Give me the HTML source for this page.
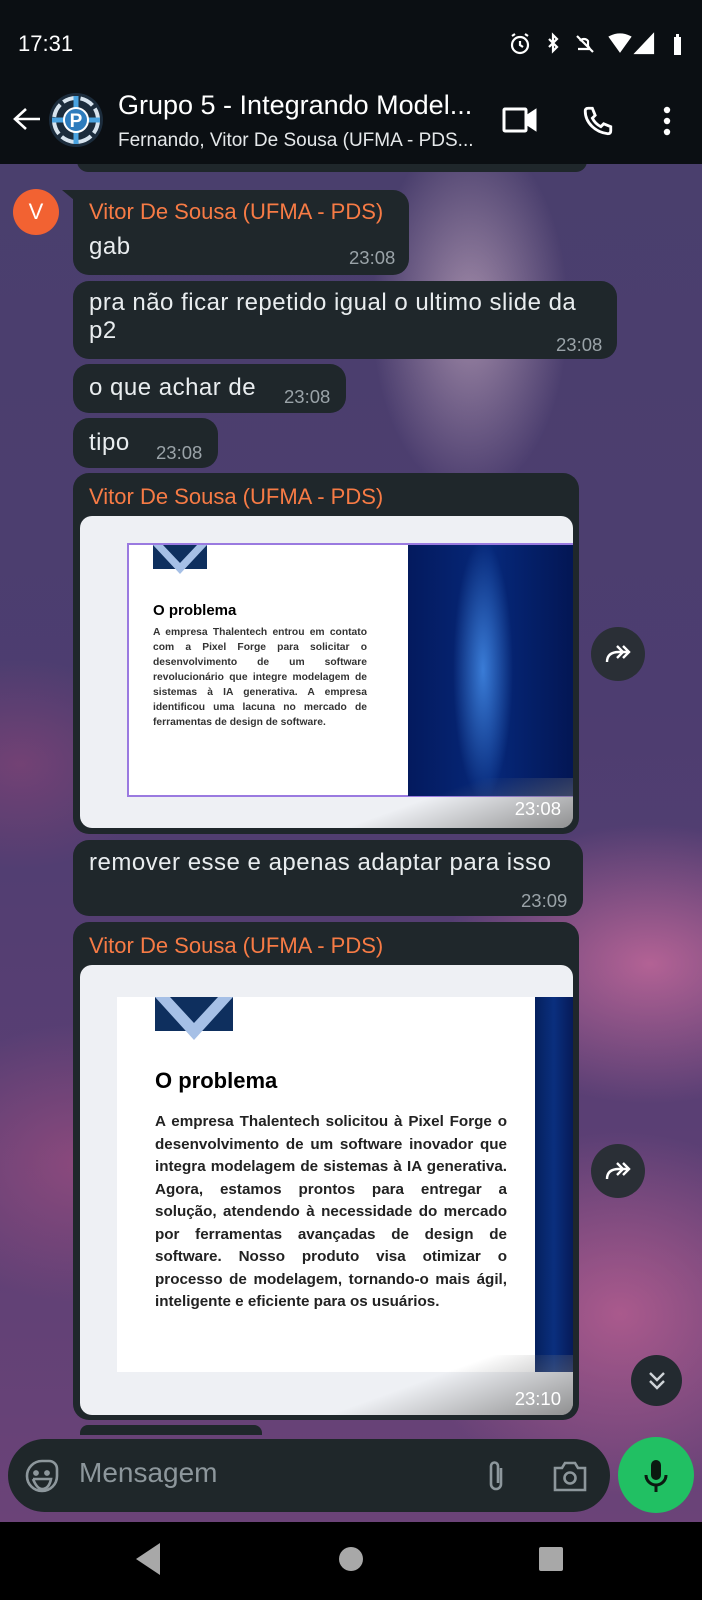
<!DOCTYPE html>
<html><head><meta charset="utf-8"><style>
*{margin:0;padding:0;box-sizing:border-box}
body{width:702px;height:1600px;overflow:hidden;position:relative;font-family:"Liberation Sans",sans-serif;background:#000}
.abs{position:absolute}
.chat{left:0;top:164px;width:702px;height:1358px;background:
radial-gradient(ellipse 140px 260px at 470px 150px,rgba(230,200,215,.55),transparent 70%),
radial-gradient(ellipse 300px 200px at 650px 800px,rgba(210,110,160,.75),transparent 70%),
radial-gradient(ellipse 300px 260px at 620px 1150px,rgba(200,100,150,.7),transparent 70%),
radial-gradient(ellipse 260px 200px at 80px 1000px,rgba(170,80,130,.6),transparent 70%),
radial-gradient(ellipse 200px 150px at 20px 600px,rgba(150,70,120,.5),transparent 70%),
linear-gradient(180deg,#4a3f6d 0%,#4d3d70 40%,#5a3f74 70%,#6b4378 100%)}
.b{position:absolute;background:#1f272b;border-radius:16px;color:#e9edef}
.name{color:#f77b45;font-size:22px;position:absolute;left:16px;white-space:nowrap}
.t{font-size:24px;letter-spacing:.5px;position:absolute;left:16px;white-space:nowrap}
.tm{font-size:18.5px;color:#9aa3a8;position:absolute}
.fw{position:absolute;width:54px;height:54px;border-radius:50%;background:#2a2f36}
.hdr{z-index:2}
</style></head><body>
<div class="abs chat"></div>
<div class="b" style="left:77px;top:150px;width:510px;height:22px"></div>
<!-- status bar + header -->
<div class="abs hdr" style="left:0;top:0;width:702px;height:164px;background:#0b0f13"></div>
<div class="abs hdr" style="left:18px;top:31px;color:#fff;font-size:22px">17:31</div>
<svg class="abs hdr" style="left:505px;top:31px" width="180" height="26" viewBox="0 0 180 26" fill="none" stroke="#fff" stroke-width="2.2">
<circle cx="15" cy="14" r="8"/><path d="M15 10v4l3 2M7 5l3-2M23 5l-3-2"/>
<path d="M44 8l8 8-4 4V4l4 4-8 8"/>
<path d="M73 18h12l-2-3v-5a5 5 0 0 0-8 0M72 5l16 16"/>
<path d="M105 6q10-5 20 0l-10 14z" fill="#fff"/>
<path d="M148 4v18h-17z" fill="#fff"/>
<rect x="169" y="6" width="7" height="18" fill="#fff" stroke="none"/><rect x="171" y="3" width="3" height="3" fill="#fff" stroke="none"/>
</svg>
<svg class="abs hdr" style="left:12px;top:106px" width="30" height="26" viewBox="0 0 30 26" fill="none" stroke="#fff" stroke-width="2.6"><path d="M28 13H4M14 3L3 13l11 10"/></svg>
<svg class="abs hdr" style="left:48px;top:92px" width="56" height="56" viewBox="0 0 56 56">
<circle cx="28" cy="28" r="27" fill="#1c2c3c"/><circle cx="28" cy="28" r="22" fill="none" stroke="#d8e4ee" stroke-width="4" stroke-dasharray="14 4"/>
<path d="M28 4v48M4 28h48" stroke="#4aa3e0" stroke-width="5"/><circle cx="28" cy="28" r="12" fill="#2e7cbd" stroke="#fff" stroke-width="2"/>
<text x="28" y="35" font-size="19" font-weight="bold" fill="#fff" text-anchor="middle" font-family="Liberation Sans">P</text></svg>
<div class="abs hdr" style="left:118px;top:90px;color:#fff;font-size:27px;white-space:nowrap">Grupo 5 - Integrando Model...</div>
<div class="abs hdr" style="left:118px;top:130px;color:#e5e8ea;font-size:19px;white-space:nowrap">Fernando, Vitor De Sousa (UFMA - PDS...</div>
<svg class="abs hdr" style="left:502px;top:106px" width="36" height="30" viewBox="0 0 36 30" fill="none" stroke="#fff" stroke-width="3"><rect x="2" y="3" width="22" height="22" rx="1"/><path d="M24 11l9-6v18l-9-6" fill="#fff"/></svg>
<svg class="abs hdr" style="left:580px;top:104px" width="36" height="34" viewBox="0 0 24 24" fill="none" stroke="#fff" stroke-width="2"><path d="M5 3l3 0 2 5-2 2q2 4 6 6l2-2 5 2v3q0 2-2 2C10 20 3 13 3 5q0-2 2-2z"/></svg>
<svg class="abs hdr" style="left:660px;top:106px" width="14" height="30"><circle cx="7" cy="4" r="3.2" fill="#fff"/><circle cx="7" cy="15" r="3.2" fill="#fff"/><circle cx="7" cy="26" r="3.2" fill="#fff"/></svg>
<!-- chat -->
<div class="abs" style="left:13px;top:189px;width:46px;height:46px;border-radius:50%;background:#f26232;color:#fff;font-size:22px;text-align:center;line-height:46px">V</div>
<div class="b" style="left:73px;top:190px;width:336px;height:85px;border-top-left-radius:0"><div class="name" style="top:9px">Vitor De Sousa (UFMA - PDS)</div><div class="t" style="top:43px">gab</div><div class="tm" style="left:276px;top:57px">23:08</div></div>
<div class="abs" style="left:62px;top:190px;width:0;height:0;border-top:10px solid #1f272b;border-left:12px solid transparent"></div>
<div class="b" style="left:73px;top:281px;width:544px;height:78px"><div class="t" style="top:8px;line-height:28px">pra não ficar repetido igual o ultimo slide da<br>p2</div><div class="tm" style="left:483px;top:53px">23:08</div></div>
<div class="b" style="left:73px;top:364px;width:273px;height:49px"><div class="t" style="top:10px">o que achar de</div><div class="tm" style="left:211px;top:22px">23:08</div></div>
<div class="b" style="left:73px;top:418px;width:145px;height:50px"><div class="t" style="top:11px">tipo</div><div class="tm" style="left:83px;top:24px">23:08</div></div>
<!-- image bubble 1 -->
<div class="b" style="left:73px;top:473px;width:506px;height:361px"><div class="name" style="top:11px">Vitor De Sousa (UFMA - PDS)</div></div>
<div class="abs" style="left:80px;top:516px;width:493px;height:312px;background:#eef0f4;border-radius:12px;overflow:hidden">
 <div class="abs" style="left:47px;top:27px;width:446px;height:254px;background:#fff;border:2px solid #9a7ae0;border-right:none"></div>
 <div class="abs" style="left:328px;top:29px;width:165px;height:251px;background:radial-gradient(ellipse 30px 130px at 75px 125px,rgba(80,160,255,.7),transparent),linear-gradient(90deg,#041a5e,#06287a 50%,#031654)"></div>
 <svg class="abs" style="left:73px;top:29px" width="54" height="30" viewBox="0 0 54 30"><rect x="0" y="0" width="54" height="24" fill="#0e2f5e"/><path d="M0 0l27 29L54 0h-10L27 18 10 0z" fill="#a6c0e6"/></svg>
 <div class="abs" style="left:73px;top:86px;font-size:15px;font-weight:bold;color:#000">O problema</div>
 <div class="abs" style="left:73px;top:109px;width:214px;font-size:10.3px;line-height:15px;font-weight:bold;color:#333;text-align:justify;text-align-last:left">A empresa Thalentech entrou em contato com a Pixel Forge para solicitar o desenvolvimento de um software revolucionário que integre modelagem de sistemas à IA generativa. A empresa identificou uma lacuna no mercado de ferramentas de design de software.</div>
 <div class="abs" style="left:250px;top:262px;width:243px;height:50px;background:linear-gradient(160deg,transparent 40%,rgba(120,120,120,.8))"></div>
 <div class="abs" style="right:12px;top:282px;color:#fff;font-size:18.5px">23:08</div>
</div>
<div class="fw" style="left:591px;top:627px"></div>
<svg class="abs" style="left:604px;top:642px" width="30" height="24" viewBox="0 0 30 24" fill="none" stroke="#fff" stroke-width="2.4"><path d="M3 20q0-10 12-10h10M19 4l6 6-6 6M13 4l6 6-6 6"/></svg>
<div class="b" style="left:73px;top:840px;width:510px;height:76px"><div class="t" style="top:9px">remover esse e apenas adaptar para isso</div><div class="tm" style="left:448px;top:50px">23:09</div></div>
<!-- image bubble 2 -->
<div class="b" style="left:73px;top:922px;width:506px;height:498px"><div class="name" style="top:11px">Vitor De Sousa (UFMA - PDS)</div></div>
<div class="abs" style="left:80px;top:965px;width:493px;height:450px;background:#eef0f4;border-radius:12px;overflow:hidden">
 <div class="abs" style="left:37px;top:32px;width:418px;height:375px;background:#fff"></div>
 <div class="abs" style="left:455px;top:32px;width:38px;height:375px;background:linear-gradient(90deg,#05205e,#0a2f7e,#061a58)"></div>
 <svg class="abs" style="left:75px;top:32px" width="78" height="44" viewBox="0 0 78 44"><rect x="0" y="0" width="78" height="34" fill="#0e2f5e"/><path d="M0 0l39 43L78 0h-15L39 26 15 0z" fill="#a6c0e6"/></svg>
 <div class="abs" style="left:75px;top:103px;font-size:22px;font-weight:bold;color:#000">O problema</div>
 <div class="abs" style="left:75px;top:146px;width:352px;font-size:15.2px;line-height:22.5px;font-weight:bold;color:#222;text-align:justify;text-align-last:left">A empresa Thalentech solicitou à Pixel Forge o desenvolvimento de um software inovador que integra modelagem de sistemas à IA generativa. Agora, estamos prontos para entregar a solução, atendendo à necessidade do mercado por ferramentas avançadas de design de software. Nosso produto visa otimizar o processo de modelagem, tornando-o mais ágil, inteligente e eficiente para os usuários.</div>
 <div class="abs" style="left:250px;top:390px;width:243px;height:60px;background:linear-gradient(160deg,transparent 40%,rgba(120,120,120,.8))"></div>
 <div class="abs" style="right:12px;top:423px;color:#fff;font-size:18.5px">23:10</div>
</div>
<div class="fw" style="left:591px;top:1144px"></div>
<svg class="abs" style="left:604px;top:1159px" width="30" height="24" viewBox="0 0 30 24" fill="none" stroke="#fff" stroke-width="2.4"><path d="M3 20q0-10 12-10h10M19 4l6 6-6 6M13 4l6 6-6 6"/></svg>
<div class="abs" style="left:631px;top:1355px;width:51px;height:51px;border-radius:50%;background:#232a30"></div>
<svg class="abs" style="left:645px;top:1369px" width="24" height="24" viewBox="0 0 24 24" fill="none" stroke="#cfd4d8" stroke-width="2.4"><path d="M5 4l7 7 7-7M5 12l7 7 7-7"/></svg>
<div class="b" style="left:80px;top:1425px;width:182px;height:10px;border-radius:8px 8px 0 0"></div>
<!-- input -->
<div class="abs" style="left:8px;top:1439px;width:602px;height:73px;border-radius:37px;background:#1f272a"></div>
<svg class="abs" style="left:25px;top:1459px" width="34" height="34" viewBox="0 0 34 34" fill="none" stroke="#8d979c" stroke-width="2.6"><path d="M17 2a15 15 0 1 0 15 15V10a8 8 0 0 0-8-8z"/><circle cx="11" cy="14" r="1.6" fill="#8d979c"/><circle cx="22" cy="14" r="1.6" fill="#8d979c"/><path d="M8 20h18q-2 10-9 10-5 0-9-10"/></svg>
<div class="abs" style="left:79px;top:1457px;font-size:28px;color:#8d979c">Mensagem</div>
<svg class="abs" style="left:484px;top:1458px" width="24" height="36" viewBox="0 0 24 36" fill="none" stroke="#8d979c" stroke-width="2.6"><path d="M17 10v16a5 5 0 0 1-10 0V8a3.5 3.5 0 0 1 7 0v17"/></svg>
<svg class="abs" style="left:553px;top:1460px" width="34" height="32" viewBox="0 0 34 32" fill="none" stroke="#8d979c" stroke-width="2.6"><path d="M2 8h7l3-5h10l3 5h7v22H2z"/><circle cx="17" cy="18" r="5.5"/></svg>
<div class="abs" style="left:618px;top:1437px;width:76px;height:76px;border-radius:50%;background:#21c063"></div>
<svg class="abs" style="left:642px;top:1458px" width="28" height="36" viewBox="0 0 28 36"><rect x="9" y="2" width="10" height="20" rx="5" fill="#0b1a10"/><path d="M4 17a10 10 0 0 0 20 0M14 27v7" fill="none" stroke="#0b1a10" stroke-width="3"/></svg>
<!-- nav -->
<div class="abs" style="left:0;top:1522px;width:702px;height:78px;background:#000"></div>
<svg class="abs" style="left:0;top:1522px" width="702" height="78"><path d="M136 37l24-16v32z" fill="#a8a8a8"/><circle cx="351" cy="37" r="12" fill="#a8a8a8"/><rect x="539" y="25" width="24" height="24" rx="2" fill="#a8a8a8"/></svg>
</body></html>
